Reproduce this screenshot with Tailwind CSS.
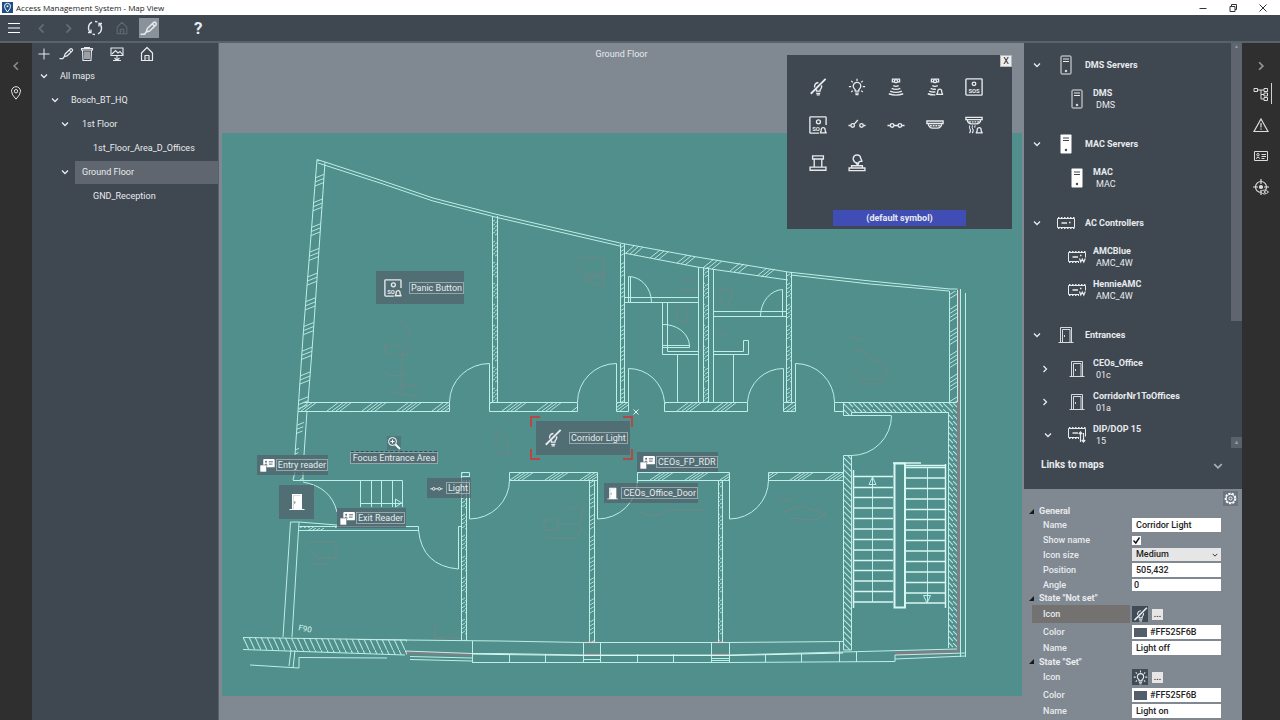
<!DOCTYPE html>
<html lang="en">
<head>
  <meta charset="UTF-8">
  <title>Access Management System - Map View</title>
  <script src="https://cdn.jsdelivr.net/npm/@tailwindcss/browser@4"></script>
  <meta name="viewport" content="width=device-width, initial-scale=1.0">
</head>
<body class="h-screen flex flex-col overflow-hidden bg-[#3f4751] text-[#e8ebee] text-[9px] leading-[12px] font-['Roboto',sans-serif]">

  <!-- icon set -->
  <svg class="hidden" xmlns="http://www.w3.org/2000/svg">
    <symbol id="i-down" viewBox="0 0 8 8"><path d="M1 2.5 4 5.5 7 2.5" fill="none" stroke="currentColor" stroke-width="1.3"/></symbol>
    <symbol id="i-right" viewBox="0 0 8 8"><path d="M2.5 1 5.5 4 2.5 7" fill="none" stroke="currentColor" stroke-width="1.3"/></symbol>
    <symbol id="i-left" viewBox="0 0 8 8"><path d="M5.5 1 2.5 4 5.5 7" fill="none" stroke="currentColor" stroke-width="1.3"/></symbol>
    <symbol id="i-pencil" viewBox="0 0 16 16"><g fill="none" stroke="currentColor" stroke-width="1.3" stroke-linejoin="round"><path d="M5.5 11.5 6.5 8.500 12 3.200Q13 2.300 14 3.300 15 4.300 14.200 5.200L8.600 10.600ZM11 4.400l2.100 2.100M.5 13.500H4l1.500-2"/></g></symbol>
    <symbol id="i-home" viewBox="0 0 16 16"><path d="M2.5 14.5V7L8 1.5 13.5 7v7.500ZM6 14V9.500h4V14M7.500 12h.8" fill="none" stroke="currentColor" stroke-width="1.2" stroke-linejoin="round"/></symbol>
    <symbol id="i-bulb-off" viewBox="0 0 20 20"><g fill="none" stroke="currentColor" stroke-width="1.500"><path d="M6.200 10.500Q5.800 5.500 10.500 5M14 8.300q.6 3-2 5M8.300 12.500V14.500h4V12.500"/><path d="M8 17h4.500M8.500 18.700h3.500" stroke-width="1.300"/><path d="M18.500 1 2 17.500" stroke-width="2"/></g></symbol>
    <symbol id="i-bulb" viewBox="0 0 20 20"><g fill="none" stroke="currentColor" stroke-width="1.500"><path d="M8 14.500V13Q5.800 11.500 5.800 9A4.200 4.200 0 0 1 14.200 9Q14.200 11.500 12 13v1.500Z"/><path d="M8 16.800h4M8.300 18.500h3.400" stroke-width="1.200"/><path d="M10 .8v2.400M1 9.500h2.600M16.400 9.500H19M3.600 3.200l1.700 1.700M16.400 3.200l-1.700 1.700M3.600 15.500l1.700-1.500M16.400 15.500l-1.700-1.500" stroke-width="1.400"/></g></symbol>
    <symbol id="i-bell" viewBox="0 0 8 8"><path d="M1 7V6.500Q2 6 2 3.500A2 2 0 0 1 6 3.500Q6 6 7 6.500V7Z" fill="none" stroke="currentColor" stroke-width="1.400"/></symbol>
    <symbol id="i-motion" viewBox="0 0 20 20"><g fill="none" stroke="currentColor" stroke-width="1.500"><path d="M5.500 1.300h9M6 1.300v3h2M14 1.300v3h-2"/><circle cx="10" cy="3.500" r="1.700"/><path d="M7 8.500q3 1.500 6 0M5.200 11.500q4.800 2.300 9.600 0M3.500 14.500q6.500 3 13 0M2 17.500q8 3 16 0"/></g></symbol>
    <symbol id="i-motion-bell" viewBox="0 0 20 20"><g fill="none" stroke="currentColor" stroke-width="1.500"><path d="M5.500 1.300h9M6 1.300v3h2M14 1.300v3h-2"/><circle cx="10" cy="3.500" r="1.700"/><path d="M7 8.500q3 1.500 6 0M5.200 11.500q3 1.500 5.800.8M3.500 14.500q3.500 1.500 7 .9M2 17.500q4 1.500 8.500 1.200"/></g><use href="#i-bell" x="11" y="10.500" width="8.500" height="9"/></symbol>
    <symbol id="i-sos" viewBox="0 0 20 20"><rect x="1" y="1" width="18" height="18" rx=".8" fill="none" stroke="currentColor" stroke-width="1.500"/><circle cx="10" cy="6.500" r="2" fill="none" stroke="currentColor" stroke-width="1.500"/><text x="10" y="16.800" font-size="6.500" font-weight="bold" text-anchor="middle" fill="currentColor">SOS</text></symbol>
    <symbol id="i-sos-bell" viewBox="0 0 20 20"><path d="M19 10V1.800Q19 1 18.200 1H1.800Q1 1 1 1.800V18.200Q1 19 1.800 19H11" fill="none" stroke="currentColor" stroke-width="1.500"/><circle cx="10.500" cy="6.500" r="2.200" fill="none" stroke="currentColor" stroke-width="1.500"/><text x="3.500" y="16.800" font-size="6.500" font-weight="bold" fill="currentColor">SO</text><use href="#i-bell" x="11.500" y="11" width="8.500" height="9"/></symbol>
    <symbol id="i-switch-open" viewBox="0 0 20 20"><g fill="none" stroke="currentColor" stroke-width="1.500"><path d="M.5 10.500h2.700M17 10.500h2.500M6.800 9 11 4.500"/><circle cx="5.200" cy="10.500" r="2"/><circle cx="15" cy="10.500" r="2"/></g></symbol>
    <symbol id="i-switch" viewBox="0 0 20 20"><g fill="none" stroke="currentColor" stroke-width="1.500"><path d="M.5 10.500h3.200M7.700 10.500h4.600M16.300 10.500h3.200"/><circle cx="5.700" cy="10.500" r="2"/><circle cx="14.300" cy="10.500" r="2"/></g></symbol>
    <symbol id="i-smoke" viewBox="0 0 20 20"><g fill="none" stroke="currentColor" stroke-width="1.500"><path d="M1 5.500h18V8.300H1ZM2.500 8.300q.5 5 5 5.200h5q4.500-.2 5-5.200"/><path d="M4.500 10.800h11" stroke-dasharray="2 1"/></g></symbol>
    <symbol id="i-smoke-bell" viewBox="0 0 20 20"><g fill="none" stroke="currentColor" stroke-width="1.500"><path d="M1 1.500h18V4H1ZM2.500 4q.5 4.500 5 4.700h5q4.500-.2 5-4.700"/><path d="M4.500 6.500h11" stroke-dasharray="2 1"/><path d="M5.500 10.500q-1.500 2 0 4t-.5 4.500M8.500 10.500q-1.500 2 0 4t-.5 4.500M11.500 10.500q-1 1-.5 2.500" stroke-width="1.200"/></g><use href="#i-bell" x="11.500" y="11" width="8.500" height="9"/></symbol>
    <symbol id="i-button" viewBox="0 0 20 20"><path d="M4 2h12v3.500H4ZM5.800 5.500v9.500M14.200 5.500v9.500M1.200 14.500h17.600V18H1.200Z" fill="none" stroke="currentColor" stroke-width="1.500"/></symbol>
    <symbol id="i-button-press" viewBox="0 0 20 20"><g fill="none" stroke="currentColor" stroke-width="1.500"><path d="M8.300 9.500Q5.500 8 5.800 4.500 6.500 1 10 1q3.800.3 4 3.500l1.500 3.500-3 .5-1.500 3.500L8.300 9.500M10 9v4"/><path d="M4 15.500v-2.500h12v2.500M1.200 15.500h17.600v3H1.200Z"/></g></symbol>
    <symbol id="i-server" viewBox="0 0 16 20"><g fill="none" stroke="currentColor" stroke-width="1"><rect x="3" y="1" width="10" height="18" rx=".8"/><path d="M5 4h6M5 6.500h6"/><circle cx="8" cy="16" r=".8" fill="currentColor"/></g></symbol>
    <symbol id="i-server-solid" viewBox="0 0 16 20"><rect x="2.500" y=".5" width="11" height="19" rx=".8" fill="#fff"/><path d="M5 4h6M5 6.500h6" stroke="#3f4751"/><circle cx="8" cy="16" r="1.200" fill="#3f4751"/></symbol>
    <symbol id="i-board" viewBox="0 0 20 14"><g fill="none" stroke="currentColor"><path d="M1.500 2.500h17v9h-17Z"/><path d="M2 1.500h16.500M2 12.500h16.500" stroke-dasharray="1.500 1.500"/><path d="M5.500 7h5.500M13 6.500h1.500" stroke-width="1.400"/></g></symbol>
    <symbol id="i-board-w" viewBox="0 0 20 14"><g fill="none" stroke="currentColor"><path d="M12 11.500H1.500v-9h17v5"/><path d="M2 1.500h16.500M2 12.500h10" stroke-dasharray="1.500 1.500"/><path d="M5.500 7h5.500M13 5.500h1.500" stroke-width="1.400"/><path d="M12.500 8.500 13.800 12 15.300 9 16.800 12 18.300 8.500" stroke-width="1.200"/></g></symbol>
    <symbol id="i-board-io" viewBox="0 0 20 17"><g fill="none" stroke="currentColor"><path d="M12 11.500H1.500v-9h17v8"/><path d="M2 1.500h16.500M2 12.500h10" stroke-dasharray="1.500 1.500"/><path d="M5.500 7h5.500" stroke-width="1.400"/><path d="M13.500 16V6M11.800 8l1.700-2 1.700 2M16.500 7v9M14.800 14l1.700 2 1.700-2" stroke-width="1.200"/></g></symbol>
    <symbol id="i-door" viewBox="0 0 16 18"><path d="M2.500 16.500V1.500h11V16.500M4.500 16V3.500h7.500V16M.5 16.500h15M6.500 9v2" fill="none" stroke="currentColor" stroke-width=".9"/></symbol>
    <symbol id="i-door-solid" viewBox="0 0 16 18"><path d="M3 1h10v15.500H3Z" fill="#fff"/><path d="M.5 16.500h15" stroke="#fff"/><path d="M4.500 16V2.500H11.500" fill="none" stroke="#b8c6ca" stroke-width=".6"/><path d="M5.800 8.500v2" stroke="#525f6b"/></symbol>
    <symbol id="i-reader" viewBox="0 0 16 14"><rect x="3.500" y="0" width="12.500" height="9" rx="1" fill="#fff"/><path d="M5 6.500q1.500-2.500 3 0M9.500 3h4.500M9.500 5.500h4" stroke="#525f6b" fill="none"/><circle cx="6.500" cy="3" r="1" fill="#525f6b"/><rect x="0" y="6.500" width="7" height="7.500" rx=".8" fill="#fff" stroke="#566f78" stroke-width=".6"/></symbol>
  </svg>

  <header class="flex h-[15px] shrink-0 items-center bg-white text-[#222]">
    <svg class="ml-[2px] size-[11px]" viewBox="0 0 11 11"><rect width="11" height="11" fill="#1d4f86"/><path d="M5.500 10Q2.500 6.500 2.500 4.300A3 3 0 0 1 8.500 4.300Q8.500 6.500 5.500 10Z" fill="none" stroke="#fff"/><circle cx="5.500" cy="4.200" r="1" fill="#fff"/></svg>
    <h1 class="ml-[3px] text-[8px] font-['Open_Sans',sans-serif]">Access Management System - Map View</h1>
    <div class="ml-auto flex items-center gap-[18px] pr-[11px]">
      <button aria-label="Minimize"><svg class="size-3" viewBox="0 0 12 12"><path d="M2.500 6.500h7" stroke="#333"/></svg></button>
      <button aria-label="Restore"><svg class="size-3" viewBox="0 0 12 12"><path d="M3 4.500h5v5H3ZM4.500 4V2.500h5v5H8" fill="none" stroke="#333"/></svg></button>
      <button aria-label="Close"><svg class="size-3" viewBox="0 0 12 12"><path d="M2.500 2.500l7 7M9.500 2.500l-7 7" stroke="#333"/></svg></button>
    </div>
  </header>

  <nav class="flex h-[28px] shrink-0 items-center border-b-2 border-[#59616b]">
    <button class="ml-2 w-3" aria-label="Menu"><svg class="size-3" viewBox="0 0 12 12"><path d="M0 1.500h12M0 6h12M0 10.500h12" stroke="#fff" stroke-width="1.200"/></svg></button>
    <button class="ml-4 text-[#626a74]" aria-label="Back"><svg class="size-[11px]"><use href="#i-left"/></svg></button>
    <button class="ml-4 text-[#626a74]" aria-label="Forward"><svg class="size-[11px]"><use href="#i-right"/></svg></button>
    <button class="ml-[13px]" aria-label="Refresh"><svg class="size-4" viewBox="0 0 16 16"><g fill="none" stroke="currentColor" stroke-width="1.300"><path d="M5 2.200A6.300 6.300 0 0 0 3.500 12.500M11 13.800A6.300 6.300 0 0 0 12.500 3.500M8 1.500A6.300 6.300 0 0 1 10.500 2M8 14.500A6.300 6.300 0 0 1 5.500 14"/><path d="M1 12.500h3V9.500M15 3.500h-3v3"/></g></svg></button>
    <button class="ml-3 text-[#626a74]" aria-label="Home"><svg class="size-[14px]"><use href="#i-home"/></svg></button>
    <button class="ml-[10px] flex size-5 items-center justify-center bg-[#89919b]" aria-label="Edit map"><svg class="size-[18px]"><use href="#i-pencil"/></svg></button>
    <button class="ml-[35px] text-[17px] font-bold leading-5" aria-label="Help">?</button>
  </nav>

  <div class="flex min-h-0 flex-1">
    <nav class="flex w-8 shrink-0 flex-col items-center gap-[15px] bg-[#2f2f30] pt-[18px]">
      <button class="text-[#8b8b8b]" aria-label="Collapse"><svg class="size-[10px]"><use href="#i-left"/></svg></button>
      <button aria-label="Maps"><svg class="size-[14px]" viewBox="0 0 14 14"><path d="M7 13.200Q2.500 8.500 2.500 5.200A4.500 4.500 0 0 1 11.500 5.200Q11.500 8.500 7 13.200Z" fill="none" stroke="#e5e5e5"/><circle cx="7" cy="5.200" r="1.700" fill="none" stroke="#e5e5e5"/></svg></button>
    </nav>

    <aside class="w-[187px] shrink-0 border-r border-[#59616b]">
      <div class="flex h-[21px] items-center pl-1">
        <button class="w-4" aria-label="Add"><svg class="size-4" viewBox="0 0 16 16"><path d="M8 2.500v11M2.500 8h11" stroke="currentColor"/></svg></button>
        <button class="ml-[7px]" aria-label="Edit"><svg class="size-[15px]"><use href="#i-pencil"/></svg></button>
        <button class="ml-[5px]" aria-label="Delete"><svg class="size-4" viewBox="0 0 16 16"><path d="M2.500 4V2.500h11V4ZM5.500 2.500v-1h5v1M3.500 4l.5 10.500h8L12.500 4M6 5.500v7.500M8 5.500v7.500M10 5.500v7.500" fill="none" stroke="currentColor" stroke-width="1.100"/></svg></button>
        <button class="ml-[14px]" aria-label="Assign map"><svg class="size-4" viewBox="0 0 16 16"><path d="M2 2h12v7.500H2ZM3 8l3.500-3.500 2.500 2.500 2-1.500 2.500 3M8 9.500v5M5.500 12l2.500 2.500 2.500-2.500M4 14.500h8" fill="none" stroke="currentColor" stroke-width="1.100"/></svg></button>
        <button class="ml-[14px]" aria-label="Home map"><svg class="size-4"><use href="#i-home"/></svg></button>
      </div>
      <ul class="[&_svg]:size-2">
        <li class="flex h-6 items-center pl-2"><svg><use href="#i-down"/></svg><button class="ml-[12px]">All maps</button></li>
        <li class="flex h-6 items-center pl-[19px]"><svg><use href="#i-down"/></svg><button class="ml-[12px]">Bosch_BT_HQ</button></li>
        <li class="flex h-6 items-center pl-[29px]"><svg><use href="#i-down"/></svg><button class="ml-[13px]">1st Floor</button></li>
        <li class="flex h-6 items-center pl-[61px]"><button>1st_Floor_Area_D_Offices</button></li>
        <li class="flex h-6 items-center pl-[29px]"><svg><use href="#i-down"/></svg><button class="ml-[6px] h-[23px] flex-1 bg-[#5f666f] pl-[7px] text-left">Ground Floor</button></li>
        <li class="flex h-6 items-center pl-[61px]"><button>GND_Reception</button></li>
      </ul>
    </aside>

    <main class="relative min-w-0 flex-1 overflow-hidden bg-[#808892]">
      <h2 class="h-[90px] pt-[5px] text-center">Ground Floor</h2>

      <div class="relative ml-[3px] mr-[2px]">
        <svg class="block w-full" viewBox="222 133 800 563">
          <defs>
            <pattern id="wall-h" patternUnits="userSpaceOnUse" x="292" y="402" width="35" height="9"><path d="M0 9 12 0M5 9 17 0M9 9 21 0M13 9 25 0" stroke="#b5e6df"/></pattern>
            <pattern id="wall-h2" patternUnits="userSpaceOnUse" x="510" y="472" width="35" height="8"><path d="M0 8 12 0M4 8 16 0M8 8 20 0M12 8 24 0" stroke="#b5e6df"/></pattern>
            <pattern id="wall-v" patternUnits="userSpaceOnUse" x="290" y="172" width="40" height="24"><path d="M0 16 40 0M0 20 40 4M0 24 40 8" stroke="#b5e6df"/></pattern>
            <pattern id="wall-r" patternUnits="userSpaceOnUse" x="949" y="302" width="8" height="23"><path d="M0 8 8 3M0 12 8 7M0 16 8 11M0 20 8 15" stroke="#b5e6df"/></pattern>
            <pattern id="wall-thin" patternUnits="userSpaceOnUse" x="0" y="218" width="5" height="21"><path d="M0 5 5 2M0 9 5 6M0 13 5 10M0 17 5 14" stroke="#a9dcd5"/></pattern>
            <pattern id="dense" patternUnits="userSpaceOnUse" x="843" y="403" width="10" height="6"><path d="M0 -6 10 4M0 0 10 10M0 -12 10 -2" stroke="#b5e6df" stroke-width="1.100"/></pattern>
            <pattern id="dense-h" patternUnits="userSpaceOnUse" x="243" y="637" width="6" height="13"><path d="M0 0 6 13" stroke="#b5e6df" stroke-width="1.100"/></pattern>
          </defs>
          <rect x="222" y="133" width="800" height="563" fill="#508f8c"/>

          <!-- furniture -->
          <g fill="none" stroke="#7b8585" stroke-width="1" opacity=".8">
            <path d="M398 320l12 8-4 10M384 345h24v10h-22ZM385 372q10 8 22 0M400 385h18M388 392l30 4M402 350v44"/>
            <path d="M576 258h28v16h-22l-6-8M584 280l20-6v12ZM680 280h18v10h-18M676 310q10-8 12 4t-10 6ZM720 288l14 4-6 14-8-4ZM716 330l10 6"/>
            <path d="M848 335l14 6M852 352q12-6 16 6l18 6v14h-26l-8-10M856 384h30M496 430l12 10v14h-12Z"/>
            <path d="M544 520h14v10h-14ZM562 508h22l-4 16h-18M548 538h28l6-10M640 512q16 8 30-2h34M778 500h14M784 512l18-6 24 8-10 6-28-2"/>
            <path d="M308 542h28v16h-18l-8-8M314 564h16M436 622l-2 16h26"/>
          </g>
          <g fill="#7d8084">
            <path d="M957 290h3v360h-3ZM405 651l67 2v3l-67-2ZM585 641h13v3h-13ZM583 653h17v3h-17ZM714 641h12v3h-12ZM712 653h17v3h-17ZM895 652l63-2v4l-63 2Z"/>
          </g>

          <!-- hatching -->
          <path d="M317 159l8 3-12 175-5 65-10 52h-3l3-42 5-75Z" fill="url(#wall-v)"/>
          <path d="M303 402H449v9H298ZM489 402H577v9H489ZM616 402h13v9h-13ZM664 402h83v9h-83ZM783 402h12v9h-12Z" fill="url(#wall-h)"/>
          <path d="M509 472h88v8h-88ZM637 472h92v8h-92ZM768 472h75v8h-75ZM461 472h8v4h-8ZM293 473h10v7h-10ZM299 526h38v4h-38Z" fill="url(#wall-h2)"/>
          <path d="M626 253l9-8M630 254l9-8M634 255l9-8M650 258l10-8M654 259l10-8M658 260l10-8M677 263l10-8M681 264l10-8M685 265l10-8M704 267l10-8M708 268l10-8M712 269l10-8M730 271l10-8M734 272l10-8M738 273l10-8M757 276l10-8M761 277l10-8M765 277l10-8" stroke="#b5e6df"/>
          <path d="M492 215h5v187h-5ZM620 244h5v158h-5ZM703 267h5v135h-5ZM786 272h5v130h-5ZM461 480h5v161h-5ZM589 480h5v162h-5ZM718 480h4v162h-4Z" fill="url(#wall-thin)"/>
          <path d="M949 291h8v111h-8Z" fill="url(#wall-r)"/>
          <path d="M843 402h114v10h-106v3h-8ZM948 412h9v236h-9ZM843 455h9v195h-9Z" fill="url(#dense)"/>
          <path d="M243 637 407 640v15L243 649Z" fill="url(#dense-h)"/>

          <g fill="none" stroke="#bdeee7">
            <!-- outer walls -->
            <path d="M295 455 298 411 303 337 317 159.500 325 162 380 180 433 198 495 214 620 243 697 257 788 272 870 281 950 289h7.500"/>
            <path d="M318 163 380 183 433 201 495 217 620 246M624 253 697 267 788 280M791 275 870 284 949 291"/>
            <path d="M325 162 313 337 308 402M307 411 304 455M303 472v8M293 480l2-8"/>
            <path d="M949.500 291V402M957.500 290V402M948.500 412V648M960.500 289V657M965.500 293V657"/>
            <!-- corridor, upper side -->
            <path d="M303 402.500H449.500V411.500H298M489.500 402.500H577.500V411.500H489.500ZM616.500 402.500h12v9h-12ZM664.500 402.500H747.500v9H664.500ZM783.500 402.500h12v9h-12ZM957 402.500H834.500v9H843M843.500 402V415.500H891M851.500 415V412.500H948"/>
            <path d="M492.500 216V402M497.500 216V402M620.500 244V402M624.500 244V402M698.500 267V402M703.500 267V402M708.500 268V402M713.500 269V402M786.500 272V402M791.500 272V402"/>
            <!-- doors, upper side -->
            <path d="M449.500 402A40 39 0 0 1 489.500 363.500V402M577.500 402A39 39 0 0 1 616.500 363.500V402M628.500 402V368.500A36 36 0 0 1 664.500 402M747.500 402A36 36 0 0 1 783.500 368.500V402M795.500 402V363.500A39 39 0 0 1 834.500 402M891.500 415.500A40 40 0 0 1 851.500 455.500"/>
            <!-- wash rooms -->
            <path d="M625 297.500H698M625 302.500H698M628.500 302V276.500A23 26 0 0 1 651.500 302M630.500 277V302M662.500 302V354.500H698M667.500 302V351.500H698M662 324.500A26 22 0 0 1 689.500 345.500H662M662 347.500H689.500V345M677.500 354V402"/>
            <path d="M713 311.500H786M713 316.500H786M760.500 316A23 27 0 0 1 782.500 289.500V316M713 351.500H743.500V340.500H748.500V354.500H713M733.500 354V402"/>
            <!-- corridor, lower side -->
            <path d="M509.500 472.500H597.500V480.500H509.500ZM637.500 472.500H729.500v8H637.500ZM843 472.500H768.500v8H843M461.500 476.500v-4h8v4h-8"/>
            <path d="M461.500 476V641M466.500 480V641M589.500 480V642M594.500 480V642M718.500 480V642M722.500 480V642M843.500 650V455.500H851.500V650Z"/>
            <path d="M509.500 480A40 39 0 0 1 469.500 519V480M637.500 480A40 39 0 0 1 597.500 519V480M768.500 480A39 39 0 0 1 729.500 519V480"/>
            <!-- entrance -->
            <path d="M293 480.500H402.500V507M303 482Q331 487 337 512M360.500 480v27M371.500 480v27M381.500 480v27M392.500 480v27M360 503.500h42M395.500 499v8l6-4Z"/>
            <path d="M283 637 290.500 522H299L337 525M299 522 292 637M299 526.500H418.500V530.500H299M418.500 530Q422 566 458.500 569V526.500H461"/>
            <path d="M243 637.500 407 640M243 649.500 405 655M250 665 299 668V657.500L387 658M291 650l-2 16M295 650l-2 18"/>
            <!-- window front -->
            <path d="M358 639.500 500 641 583 642.500H729L843 641.500M405 651 472 653.500H500L583 655H729L843 652 957 649M410 656.500 472 658M410 659.500 472 661M472 662.500H729L895 661.500V655L966 653M895 659 966 656"/>
            <path d="M472.500 641v22M509.500 654v8M545.500 654v8M583.500 642v20M600.500 642v20M637.500 654v8M673.500 654v8M711.500 642v20M729.500 642v20M765.500 654v8M801.500 654v8M839.500 641v21M856.500 652v10M583 659.500h17M711 658.500h18M711 660.500h18"/>
            <!-- arrows on the stairs -->
            <path d="M872.500 477V602M869 484.500h7l-3.500-7.500ZM927.500 468V602M923.500 595.500h7l-3.500 7.500Z"/>
          </g>
          <g fill="none" stroke="#d6f8f3" stroke-width="1.500">
            <path d="M853.500 470V608M945.500 464V608M893 463H921M905 465.500H946"/>
            <path d="M854 476.500h39M854 487.500h39M854 497.500h39M854 508h39M854 518.500h39M854 529h39M854 539.500h39M854 550h39M854 560.500h39M854 570.500h39M854 581h39M854 591.500h39M854 602h39"/>
            <path d="M906 467.500h39M906 478h39M906 488.500h39M906 499h39M906 509.500h39M906 519.500h39M906 530h39M906 540.500h39M906 551h39M906 561.500h39M906 572h39M906 582.500h39M906 593h39M906 603h39"/>
            <path d="M894.500 463.500h10.500V607.500h-10.500Z" stroke-width="2"/>
            <path d="M472 654 500 654.500 583 655.500H729L843 653" stroke-width="1"/>
          </g>
          <text x="298" y="630" transform="rotate(12 298 630)" font-size="8" fill="#d6f8f3">F90</text>
        </svg>

        <!-- devices placed on the map -->
        <button class="absolute left-[154px] top-[138px] flex h-[33px] w-[88px] items-center whitespace-nowrap bg-[#525f6b]/70 pl-2"><svg class="size-[18px]"><use href="#i-sos-bell"/></svg><span class="ml-[7px] border border-[#c3ccd2]/60 px-px leading-[10px]">Panic Button</span></button>
        <div class="absolute left-[308px] top-[283px] h-[44px] w-[103px]">
          <svg class="size-full" viewBox="0 0 103 44"><path d="M1 11V1h9M93 1h9v10M1 33v10h9M93 43h9V33" fill="none" stroke="#d8302f" stroke-width="1.500"/></svg>
        </div>
        <button class="absolute left-[314px] top-[288px] flex h-[34px] w-[94px] items-center whitespace-nowrap bg-[#525f6b]/70 pl-2"><svg class="size-[18px]"><use href="#i-bulb-off"/></svg><span class="ml-[7px] border border-[#c3ccd2]/60 px-px leading-[10px]">Corridor Light</span></button>
        <button class="absolute left-[410px] top-[275px]" aria-label="Remove from map"><svg class="size-2" viewBox="0 0 8 8"><path d="M1.500 1.500l5 5M6.500 1.500l-5 5" stroke="#e8eef0"/></svg></button>
        <button class="absolute left-[129px] top-[303px] flex w-[86px] flex-col items-center">
          <svg class="size-[14px] bg-[#525f6b]/50" viewBox="0 0 14 14"><g fill="none" stroke="#fff"><circle cx="5.500" cy="5.500" r="4"/><path d="M3.500 5.500h4M5.500 3.500v4"/><path d="M8.500 8.500l4.500 4.500" stroke-width="1.800"/></g></svg>
          <span class="mt-px w-full border-t border-dashed border-[#2f4a50]"></span>
          <span class="whitespace-nowrap border border-[#c3ccd2]/60 bg-[#525f6b]/70 px-0.5 leading-[10px]">Focus Entrance Area</span>
        </button>
        <button class="absolute left-[35px] top-[322px] flex h-5 w-[71px] items-center whitespace-nowrap bg-[#525f6b]/70 pl-[3px]"><svg class="h-[13px] w-[15px]"><use href="#i-reader"/></svg><span class="ml-px border border-[#c3ccd2]/60 px-px leading-[10px]">Entry reader</span></button>
        <button class="absolute left-[57px] top-[352px] flex h-[34px] w-[35px] items-center justify-center bg-[#525f6b]/70" aria-label="Entrance door"><svg class="h-[18px] w-4"><use href="#i-door-solid"/></svg></button>
        <button class="absolute left-[115px] top-[375px] flex h-5 w-[69px] items-center whitespace-nowrap bg-[#525f6b]/70 pl-[3px]"><svg class="h-[13px] w-[15px]"><use href="#i-reader"/></svg><span class="ml-px border border-[#c3ccd2]/60 px-px leading-[10px]">Exit Reader</span></button>
        <button class="absolute left-[205px] top-[345px] flex h-5 w-[44px] items-center whitespace-nowrap bg-[#525f6b]/70 pl-[3px]"><svg class="size-[13px]"><use href="#i-switch"/></svg><span class="ml-[3px] border border-[#c3ccd2]/60 px-px leading-[10px]">Light</span></button>
        <button class="absolute left-[415px] top-[319px] flex h-5 w-[81px] items-center whitespace-nowrap bg-[#525f6b]/70 pl-[3px]"><svg class="h-[13px] w-[15px]"><use href="#i-reader"/></svg><span class="ml-px border border-[#c3ccd2]/60 px-px leading-[10px]">CEOs_FP_RDR</span></button>
        <button class="absolute left-[382px] top-[350px] flex h-5 w-[94px] items-center whitespace-nowrap bg-[#525f6b]/70 pl-[3px]"><svg class="h-[13px] w-3"><use href="#i-door-solid"/></svg><span class="ml-[3px] border border-[#c3ccd2]/60 px-px leading-[10px]">CEOs_Office_Door</span></button>
      </div>

      <!-- symbol picker -->
      <section class="absolute right-[12px] top-[12px] h-[174px] w-[225px] bg-[#3f4751] pl-3 pt-[13px]">
        <button class="absolute right-0 top-0 h-3 w-3 border border-[#b8b8b8] bg-[#eee] text-[9px] leading-[10px] text-[#222]" aria-label="Close">X</button>
        <div class="grid w-[194px] grid-cols-5 auto-rows-[38px] place-items-center [&_svg]:size-[18px] [&_svg]:block">
          <button><svg><use href="#i-bulb-off"/></svg></button>
          <button><svg><use href="#i-bulb"/></svg></button>
          <button><svg><use href="#i-motion"/></svg></button>
          <button><svg><use href="#i-motion-bell"/></svg></button>
          <button><svg><use href="#i-sos"/></svg></button>
          <button><svg><use href="#i-sos-bell"/></svg></button>
          <button><svg><use href="#i-switch-open"/></svg></button>
          <button><svg><use href="#i-switch"/></svg></button>
          <button><svg><use href="#i-smoke"/></svg></button>
          <button><svg><use href="#i-smoke-bell"/></svg></button>
          <button><svg><use href="#i-button"/></svg></button>
          <button><svg><use href="#i-button-press"/></svg></button>
        </div>
        <button class="ml-[34px] mt-7 h-4 w-[133px] bg-[#404db4] font-bold">(default symbol)</button>
      </section>
    </main>

    <aside class="flex w-[218px] shrink-0 flex-col">
      <div class="flex">
        <ul class="flex-1 pt-1 [&_b]:font-bold">
          <li class="flex h-[35px] items-center pl-[9px]"><svg class="size-2"><use href="#i-down"/></svg><svg class="ml-[17px] h-5 w-4"><use href="#i-server"/></svg><b class="ml-[11px]">DMS Servers</b></li>
          <li class="flex h-[33px] items-center pl-[45px]"><svg class="h-5 w-4"><use href="#i-server"/></svg><div class="ml-[8px]"><b>DMS</b><p class="pl-[3px]">DMS</p></div></li>
          <li class="flex h-[46px] items-center pl-[9px] pt-3"><svg class="size-2"><use href="#i-down"/></svg><svg class="ml-[17px] h-5 w-4"><use href="#i-server-solid"/></svg><b class="ml-[11px]">MAC Servers</b></li>
          <li class="flex h-[33px] items-center pl-[45px]"><svg class="h-5 w-4"><use href="#i-server-solid"/></svg><div class="ml-[8px]"><b>MAC</b><p class="pl-[3px]">MAC</p></div></li>
          <li class="flex h-[46px] items-center pl-[9px] pt-3"><svg class="size-2"><use href="#i-down"/></svg><svg class="ml-[15px] h-[14px] w-5"><use href="#i-board"/></svg><b class="ml-[9px]">AC Controllers</b></li>
          <li class="flex h-[33px] items-center pl-[43px]"><svg class="h-[14px] w-5"><use href="#i-board-w"/></svg><div class="ml-[6px]"><b>AMCBlue</b><p class="pl-[3px]">AMC_4W</p></div></li>
          <li class="flex h-[33px] items-center pl-[43px]"><svg class="h-[14px] w-5"><use href="#i-board-w"/></svg><div class="ml-[6px]"><b>HennieAMC</b><p class="pl-[3px]">AMC_4W</p></div></li>
          <li class="flex h-[46px] items-center pl-[9px] pt-3"><svg class="size-2"><use href="#i-down"/></svg><svg class="ml-[17px] h-[18px] w-4"><use href="#i-door"/></svg><b class="ml-[11px]">Entrances</b></li>
          <li class="flex h-[33px] items-center pl-[17px]"><svg class="size-2"><use href="#i-right"/></svg><svg class="ml-5 h-[18px] w-4"><use href="#i-door"/></svg><div class="ml-[8px]"><b>CEOs_Office</b><p class="pl-[3px]">01c</p></div></li>
          <li class="flex h-[33px] items-center pl-[17px]"><svg class="size-2"><use href="#i-right"/></svg><svg class="ml-5 h-[18px] w-4"><use href="#i-door"/></svg><div class="ml-[8px]"><b>CorridorNr1ToOffices</b><p class="pl-[3px]">01a</p></div></li>
          <li class="flex h-[33px] items-center pl-[20px]"><svg class="size-2"><use href="#i-down"/></svg><svg class="ml-[15px] h-[17px] w-5"><use href="#i-board-io"/></svg><div class="ml-[6px]"><b>DIP/DOP 15</b><p class="pl-[3px]">15</p></div></li>
        </ul>
        <div class="flex w-[11px] flex-col justify-between pb-[3px]">
          <div class="h-[278px] bg-[#5e656e] text-center text-[5px] leading-[6px] text-[#9299a1]">▲</div>
          <div class="h-[11px] bg-[#59616b] text-center text-[6px] leading-[10px] text-[#9299a1]">▲</div>
        </div>
      </div>
      <button class="flex h-[38px] shrink-0 items-start justify-between pl-[17px] pr-[19px] pt-2 text-[10px] font-bold">Links to maps<svg class="mt-[2px] size-[10px] text-[#a9afb6]"><use href="#i-down"/></svg></button>

      <form class="relative flex-1 bg-[#808892] pt-4 font-medium">
        <button type="button" class="absolute right-[4px] top-[2px] bg-[#6a737e] p-px" aria-label="Settings"><svg class="size-[13px]" viewBox="0 0 14 14"><g fill="none" stroke="#fff"><circle cx="7" cy="7" r="5.500" stroke-width="1.600" stroke-dasharray="2.500 1.300"/><circle cx="7" cy="7" r="4.500"/><circle cx="7" cy="7" r="1.700"/></g></svg></button>
        <h3 class="flex h-3 items-center pl-[5px] font-bold"><svg class="size-[5px]" viewBox="0 0 5 5"><path d="M5 0v5H0Z" fill="#16191d"/></svg><span class="ml-[5px]">General</span></h3>
        <div class="flex h-4 items-center"><label for="name" class="w-[108px] pl-[19px]">Name</label><input id="name" value="Corridor Light" class="h-[14px] w-[89px] bg-white px-1 text-[#222]"></div>
        <div class="flex h-[14px] items-center"><label for="show" class="w-[108px] pl-[19px]">Show name</label><span class="relative flex"><input id="show" type="checkbox" checked class="peer size-[9px] appearance-none bg-white"><svg class="pointer-events-none absolute inset-0 hidden size-[9px] peer-checked:block" viewBox="0 0 9 9"><path d="M1.500 4.500 3.800 7 7.500 1.500" fill="none" stroke="#111" stroke-width="1.400"/></svg></span></div>
        <div class="flex h-[15px] items-center"><label for="size" class="w-[108px] pl-[19px]">Icon size</label><span class="relative w-[89px]"><select id="size" class="block h-[13px] w-full appearance-none bg-[#e6e6e6] px-1 leading-[13px] text-[#222]"><option>Small</option><option selected>Medium</option><option>Large</option></select><svg class="pointer-events-none absolute right-[3px] top-[4px] size-[6px] text-[#333]"><use href="#i-down"/></svg></span></div>
        <div class="flex h-4 items-center"><label for="pos" class="w-[108px] pl-[19px]">Position</label><input id="pos" value="505,432" class="h-[14px] w-[89px] bg-white px-1 text-[#222]"></div>
        <div class="flex h-[14px] items-center"><label for="angle" class="w-[108px] pl-[19px]">Angle</label><input id="angle" value="0" class="h-3 w-[89px] bg-white px-[2px] text-[#222]"></div>

        <h3 class="flex h-3 items-center pl-[5px] font-bold"><svg class="size-[5px]" viewBox="0 0 5 5"><path d="M5 0v5H0Z" fill="#16191d"/></svg><span class="ml-[5px]">State "Not set"</span></h3>
        <div class="flex h-5 items-center pl-2"><span class="flex h-[18px] w-[98px] items-center bg-[#737270] pl-[11px]">Icon</span><span class="ml-[2px] flex size-4 items-center justify-center bg-[#3f4b57]"><svg class="size-[15px]"><use href="#i-bulb-off"/></svg></span><button type="button" class="ml-1 h-[11px] w-[11px] bg-[#e6e6e6] leading-[8px] text-[#222]">...</button></div>
        <div class="flex h-4 items-center"><label for="c1" class="w-[108px] pl-[19px]">Color</label><span class="flex h-[14px] w-[89px] items-center bg-white pl-[2px]"><i class="h-[9px] w-[13px] bg-[#525f6b]"></i><input id="c1" value="#FF525F6B" class="w-[68px] pl-[3px] text-[#222]"></span></div>
        <div class="flex h-4 items-center"><label for="n1" class="w-[108px] pl-[19px]">Name</label><input id="n1" value="Light off" class="h-[14px] w-[89px] bg-white px-1 text-[#222]"></div>

        <h3 class="flex h-[11px] items-center pl-[5px] font-bold"><svg class="size-[5px]" viewBox="0 0 5 5"><path d="M5 0v5H0Z" fill="#16191d"/></svg><span class="ml-[5px]">State "Set"</span></h3>
        <div class="flex h-5 items-center pl-[19px]"><span class="w-[89px]">Icon</span><span class="flex size-4 items-center justify-center bg-[#3f4b57]"><svg class="size-[15px]"><use href="#i-bulb"/></svg></span><button type="button" class="ml-1 h-[11px] w-[11px] bg-[#e6e6e6] leading-[8px] text-[#222]">...</button></div>
        <div class="flex h-4 items-center"><label for="c2" class="w-[108px] pl-[19px]">Color</label><span class="flex h-[14px] w-[89px] items-center bg-white pl-[2px]"><i class="h-[9px] w-[13px] bg-[#525f6b]"></i><input id="c2" value="#FF525F6B" class="w-[68px] pl-[3px] text-[#222]"></span></div>
        <div class="flex h-4 items-center"><label for="n2" class="w-[108px] pl-[19px]">Name</label><input id="n2" value="Light on" class="h-[14px] w-[89px] bg-white px-1 text-[#222]"></div>
      </form>
    </aside>

    <nav class="flex w-[38px] shrink-0 flex-col items-center gap-[15px] bg-[#2f2f30] pt-[18px] text-[#dcdcdc] [&_svg]:block">
      <button class="text-[#9a9a9a]" aria-label="Collapse"><svg class="size-[10px]"><use href="#i-right"/></svg></button>
      <button class="relative" aria-label="Device tree"><svg class="size-4" viewBox="0 0 16 16"><g fill="none" stroke="currentColor"><path d="M1 2.500h3.500v3H1ZM11 2.500h3.500v3H11ZM11 7h3.500v3H11ZM11 11.500h3.500v3H11ZM4.500 4H11M8 4v9h3M8 8.500h3"/></g></svg><span class="absolute -right-[3px] -top-[3px] h-[21px] w-px bg-[#d0d0d0]"></span></button>
      <button aria-label="Alarms"><svg class="size-4" viewBox="0 0 16 16"><path d="M8 2 15 14.500H1Z" fill="none" stroke="currentColor" stroke-width="1.200"/><path d="M8 6v4.500M8 11.500v1.300" stroke="currentColor" stroke-width="1.200"/></svg></button>
      <button aria-label="Badges"><svg class="size-4" viewBox="0 0 16 16"><g fill="none" stroke="currentColor"><path d="M1.500 3.500h13v9h-13Z"/><circle cx="5" cy="6.700" r="1.200"/><path d="M3 10.500q2-3 4 0M8.500 6.500h4.500M8.500 8.500h4.500M8.500 10.500h3"/></g></svg></button>
      <button aria-label="Tracking"><svg class="size-4" viewBox="0 0 16 16"><g fill="none" stroke="currentColor" stroke-width="1.200"><circle cx="8" cy="8" r="5.500"/><circle cx="8" cy="8" r="1.500" fill="currentColor"/><path d="M8 0v5M8 11v5M0 8h5M11 8h5"/></g><path d="M7.500 13q3.500-4 8 0-4 4-8 0Z" fill="#2f2f30" stroke="currentColor"/><circle cx="11.700" cy="13" r="1" fill="currentColor"/></svg></button>
    </nav>
  </div>

</body>
</html>
